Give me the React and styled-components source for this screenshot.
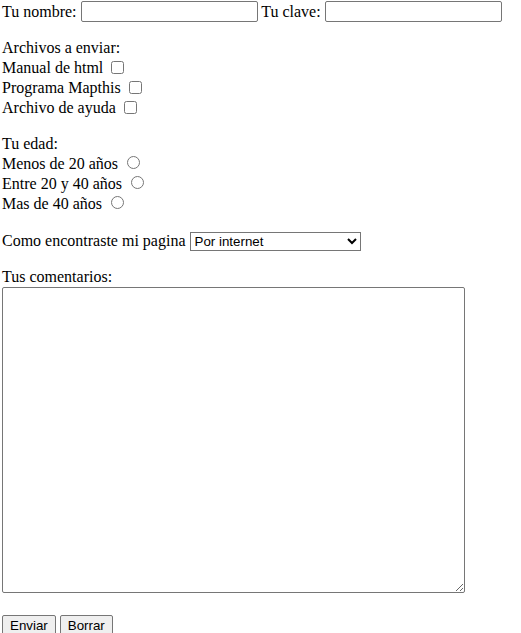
import React from "react"
import styled, { createGlobalStyle } from "styled-components"

const GlobalStyle = createGlobalStyle`
  body{
    margin: 0;
    background: #ffffff;
    color: #000000;
    font-family: "Liberation Serif", "Times New Roman", serif;
    font-size: 16px;
  }
`

const archivos = ["Manual de html", "Programa Mapthis", "Archivo de ayuda"]
const edades = ["Menos de 20 años", "Entre 20 y 40 años", "Mas de 40 años"]

export default function App(){
  return(
    <>
    <GlobalStyle />
    <Form onSubmit={e => e.preventDefault()}>
      <Line $h={21}>
        Tu nombre: <TextInput type="text" /> Tu clave: <TextInput type="password" />
      </Line>

      <Group>
        <Line>Archivos a enviar:</Line>
        {archivos.map(a => (
          <Line key={a}>{a} <Check type="checkbox" /></Line>
        ))}
      </Group>

      <Group>
        <Line>Tu edad:</Line>
        {edades.map(e => (
          <Line key={e}>{e} <Radio type="radio" name="edad" /></Line>
        ))}
      </Group>

      <Group $top={17}>
        <Line>
          Como encontraste mi pagina <Select defaultValue="internet">
            <option value="internet">Por internet</option>
            <option value="amigo">Por un amigo</option>
            <option value="otro">Otro</option>
          </Select>
        </Line>
      </Group>

      <Group>
        <Line>Tus comentarios:</Line>
        <Comments />
      </Group>

      <Buttons>
        <Button type="submit">Enviar</Button>
        <Button type="reset">Borrar</Button>
      </Buttons>
    </Form>
    </>
  )
}

const Form = styled.form`
  padding: 1px 2px;
`

const Line = styled.div`
  height: ${p => p.$h || 20}px;
  line-height: ${p => p.$h || 20}px;
  white-space: nowrap;
`

const Group = styled.div`
  margin-top: ${p => p.$top || 16}px;
`

const TextInput = styled.input`
  box-sizing: border-box;
  width: 177px;
  height: 21px;
  margin: 0;
  padding: 1px 2px;
  border: 1px solid #767676;
  border-radius: 2px;
  font-family: "Liberation Sans", Arial, sans-serif;
  font-size: 13.33px;
  vertical-align: top;
`

const Check = styled.input`
  width: 13px;
  height: 13px;
  margin: 0 3px 0 4px;
  vertical-align: -1px;
`

const Radio = styled.input`
  width: 13px;
  height: 13px;
  margin: 0 3px 0 5px;
  vertical-align: 0px;
`

const Select = styled.select`
  box-sizing: border-box;
  width: 171px;
  height: 19px;
  margin: 0;
  font-family: "Liberation Sans", Arial, sans-serif;
  font-size: 13.33px;
  border: 1px solid #767676;
  border-radius: 0;
  background: #ffffff;
  color: #000000;
  vertical-align: 0px;
`

const Comments = styled.textarea`
  display: block;
  box-sizing: border-box;
  width: 463px;
  height: 306px;
  margin: 0;
  border: 1px solid #767676;
  border-radius: 2px;
  font-family: "Liberation Mono", monospace;
  font-size: 13.33px;
  resize: both;
`

const Buttons = styled.div`
  margin-top: 22px;
  display: flex;
  gap: 4px;
`

const Button = styled.button`
  box-sizing: border-box;
  height: 21px;
  padding: 1px 7px;
  background: #efefef;
  border: 1px solid #767676;
  border-radius: 2px;
  font-family: "Liberation Sans", Arial, sans-serif;
  font-size: 13.33px;
  color: #000000;
`
